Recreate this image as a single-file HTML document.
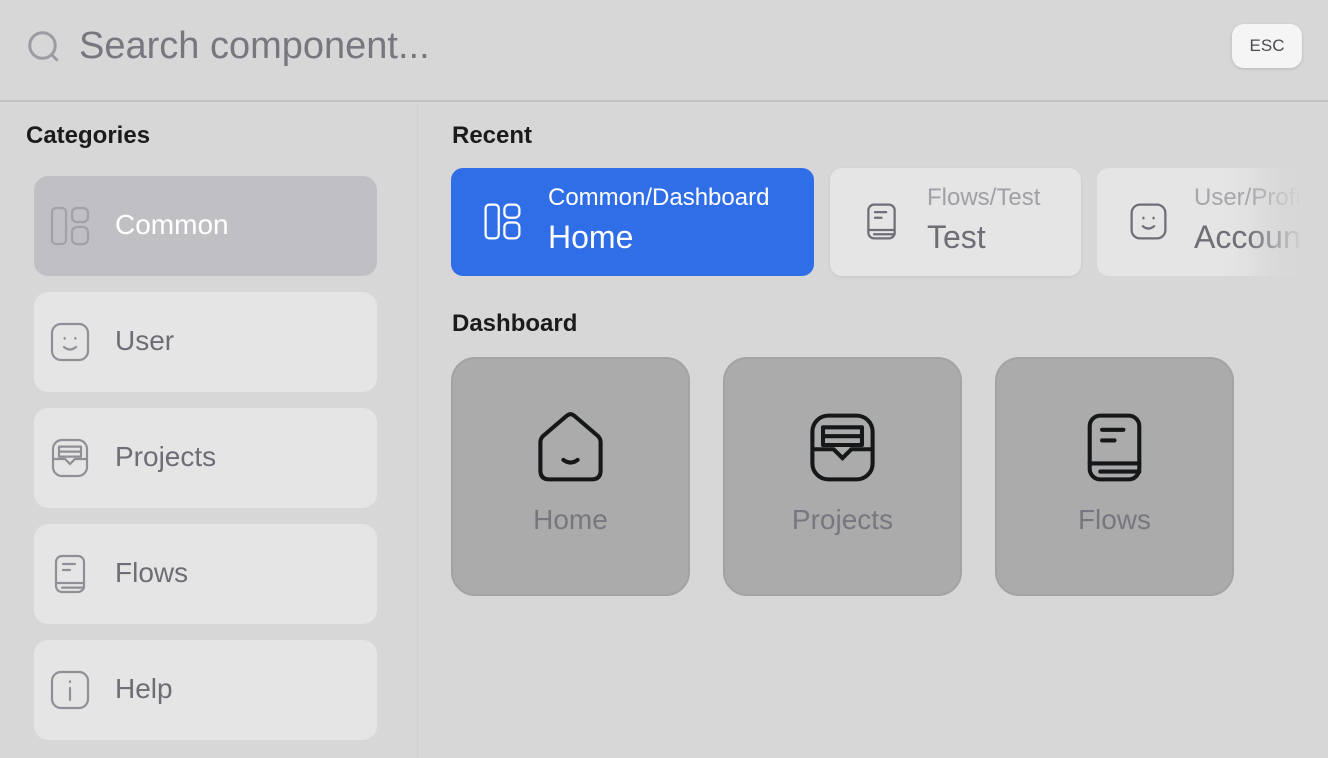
<!DOCTYPE html>
<html><head><meta charset="utf-8"><style>
*{margin:0;padding:0;box-sizing:border-box}
body{width:1328px;height:758px;background:#d7d7d7;font-family:"Liberation Sans",sans-serif;position:relative;overflow:hidden}
.a{position:absolute}
.hdr{left:0;top:0;width:1328px;height:102px;border-bottom:2px solid #c2c2c6}
.side{left:0;top:104px;width:418px;height:654px;border-right:1px solid #cfcfd1}
.item{position:absolute;left:34px;width:343px;height:100px;border-radius:14px;background:#e5e5e5}
.item svg{position:absolute;left:12px;top:26px;width:48px;height:48px}
.item span{position:absolute;left:81px;top:33px;font-size:28px;color:#6d6d75}
.t{font-size:24px;font-weight:bold;color:#1b1b1d}
.card{position:absolute;top:168px;height:108px;border-radius:12px}
.card .s{position:absolute;left:97px;top:16px;font-size:24px}
.card .m{position:absolute;left:97px;top:51px;font-size:32px}
.card svg{position:absolute;left:29px;top:31px;width:45px;height:45px}
.tile{position:absolute;top:357px;width:239px;height:239px;border-radius:24px;background:#ababab;border:2px solid #a3a3a5}
.tile svg{position:absolute;left:75px;top:46px;width:85px;height:85px}
.tile span{position:absolute;left:0;width:100%;text-align:center;top:145px;font-size:28px;color:#77777f}
</style></head><body>
<svg width="0" height="0" style="position:absolute">
<defs>
<symbol id="lay" viewBox="0 0 24 24"><rect x="3" y="3" width="7" height="18" rx="2"/><rect x="13" y="3" width="8" height="7" rx="2.5"/><rect x="13" y="12.5" width="8" height="8.5" rx="2.5"/></symbol>
<symbol id="smile" viewBox="0 0 24 24"><rect x="3" y="3" width="18" height="18" rx="4.5"/><path d="M9.3 10v.3M14.7 10v.3"/><path d="M9 14.5q3 2.5 6 0"/></symbol>
<symbol id="tray" viewBox="0 0 24 24"><rect x="3.5" y="3" width="17" height="18" rx="4.5"/><path d="M6.5 6.3h11M6.5 8.8h11M6.5 11.3h11M6.5 6.3v5M17.5 6.3v5M4 12.5h5.5l2.5 2.5 2.5-2.5H20"/></symbol>
<symbol id="book" viewBox="0 0 24 24"><rect x="5" y="3" width="14" height="18" rx="3"/><path d="M8.5 7h6M8.5 10h3.5M5 16.5h14M8 18.8h11"/></symbol>
<symbol id="info" viewBox="0 0 24 24"><rect x="3" y="3" width="18" height="18" rx="4.5"/><path d="M12 11v6M12 7.7v.3"/></symbol>
<symbol id="house" viewBox="0 0 24 24"><path d="M3.5 10.5q0-1 .8-1.8l6.7-5.7q1-.8 2 0l6.7 5.7q.8.8.8 1.8v8q0 2.5-2.5 2.5h-12q-2.5 0-2.5-2.5z"/><path d="M10 15.5q2 1.5 4 0"/></symbol>
</defs></svg>

<div class="a hdr">
<svg class="a" style="left:26px;top:29px;width:36px;height:36px" viewBox="0 0 24 24" fill="none" stroke="#9c9ca2" stroke-width="2" stroke-linecap="round"><circle cx="11" cy="11" r="8.5"/><path d="M17.5 17.5l3 3"/></svg>
<div class="a" style="left:79px;top:25px;font-size:38px;color:#77777f">Search component...</div>
<div class="a" style="left:1232px;top:24px;width:70px;height:44px;border-radius:12px;background:#f5f5f5;box-shadow:0 1px 3px rgba(0,0,0,.15);text-align:center;line-height:44px;font-size:17px;color:#4a4a52">ESC</div>
</div>

<div class="a side"></div>
<div class="a t" style="left:26px;top:122px">Categories</div>

<div class="item" style="top:176px;background:#c0bfc3"><svg fill="none" stroke="#a2a1a6" stroke-width="1.1"><use href="#lay"/></svg><span style="color:#fff">Common</span></div>
<div class="item" style="top:292px"><svg fill="none" stroke="#8f8f95" stroke-width="1.1" stroke-linecap="round"><use href="#smile"/></svg><span>User</span></div>
<div class="item" style="top:408px"><svg fill="none" stroke="#8f8f95" stroke-width="1.1" stroke-linecap="round"><use href="#tray"/></svg><span>Projects</span></div>
<div class="item" style="top:524px"><svg fill="none" stroke="#8f8f95" stroke-width="1.1" stroke-linecap="round"><use href="#book"/></svg><span>Flows</span></div>
<div class="item" style="top:640px"><svg fill="none" stroke="#8f8f95" stroke-width="1.1" stroke-linecap="round"><use href="#info"/></svg><span>Help</span></div>

<div class="a t" style="left:452px;top:122px">Recent</div>
<div class="card" style="left:451px;width:363px;background:#306ee8;color:#fff"><svg fill="none" stroke="#fff" stroke-width="1.2"><use href="#lay"/></svg><div class="s">Common/Dashboard</div><div class="m">Home</div></div>
<div class="card" style="left:830px;width:251px;background:#e5e5e5;box-shadow:0 1px 3px rgba(0,0,0,.08)"><svg fill="none" stroke="#6e6e76" stroke-width="1.2" stroke-linecap="round"><use href="#book"/></svg><div class="s" style="color:#a0a0a6">Flows/Test</div><div class="m" style="color:#6e6e76">Test</div></div>
<div class="card" style="left:1097px;width:231px;background:linear-gradient(90deg,#e5e5e5 55%,#d7d7d7 92%);overflow:hidden;border-radius:12px 0 0 12px"><svg fill="none" stroke="#6e6e76" stroke-width="1.2" stroke-linecap="round"><use href="#smile"/></svg><div class="s" style="color:#a6a6ab;white-space:nowrap">User/Profile</div><div class="m" style="color:#6e6e76;white-space:nowrap">Account</div><div class="a" style="left:150px;top:0;width:81px;height:108px;background:linear-gradient(90deg,rgba(215,215,215,0),#d7d7d7 70%)"></div></div>

<div class="a t" style="left:452px;top:310px">Dashboard</div>
<div class="tile" style="left:451px"><svg fill="none" stroke="#151719" stroke-width="1.15" stroke-linecap="round"><use href="#house"/></svg><span>Home</span></div>
<div class="tile" style="left:723px"><svg fill="none" stroke="#151719" stroke-width="1.15" stroke-linecap="round"><use href="#tray"/></svg><span>Projects</span></div>
<div class="tile" style="left:995px"><svg fill="none" stroke="#151719" stroke-width="1.15" stroke-linecap="round"><use href="#book"/></svg><span>Flows</span></div>
</body></html>
